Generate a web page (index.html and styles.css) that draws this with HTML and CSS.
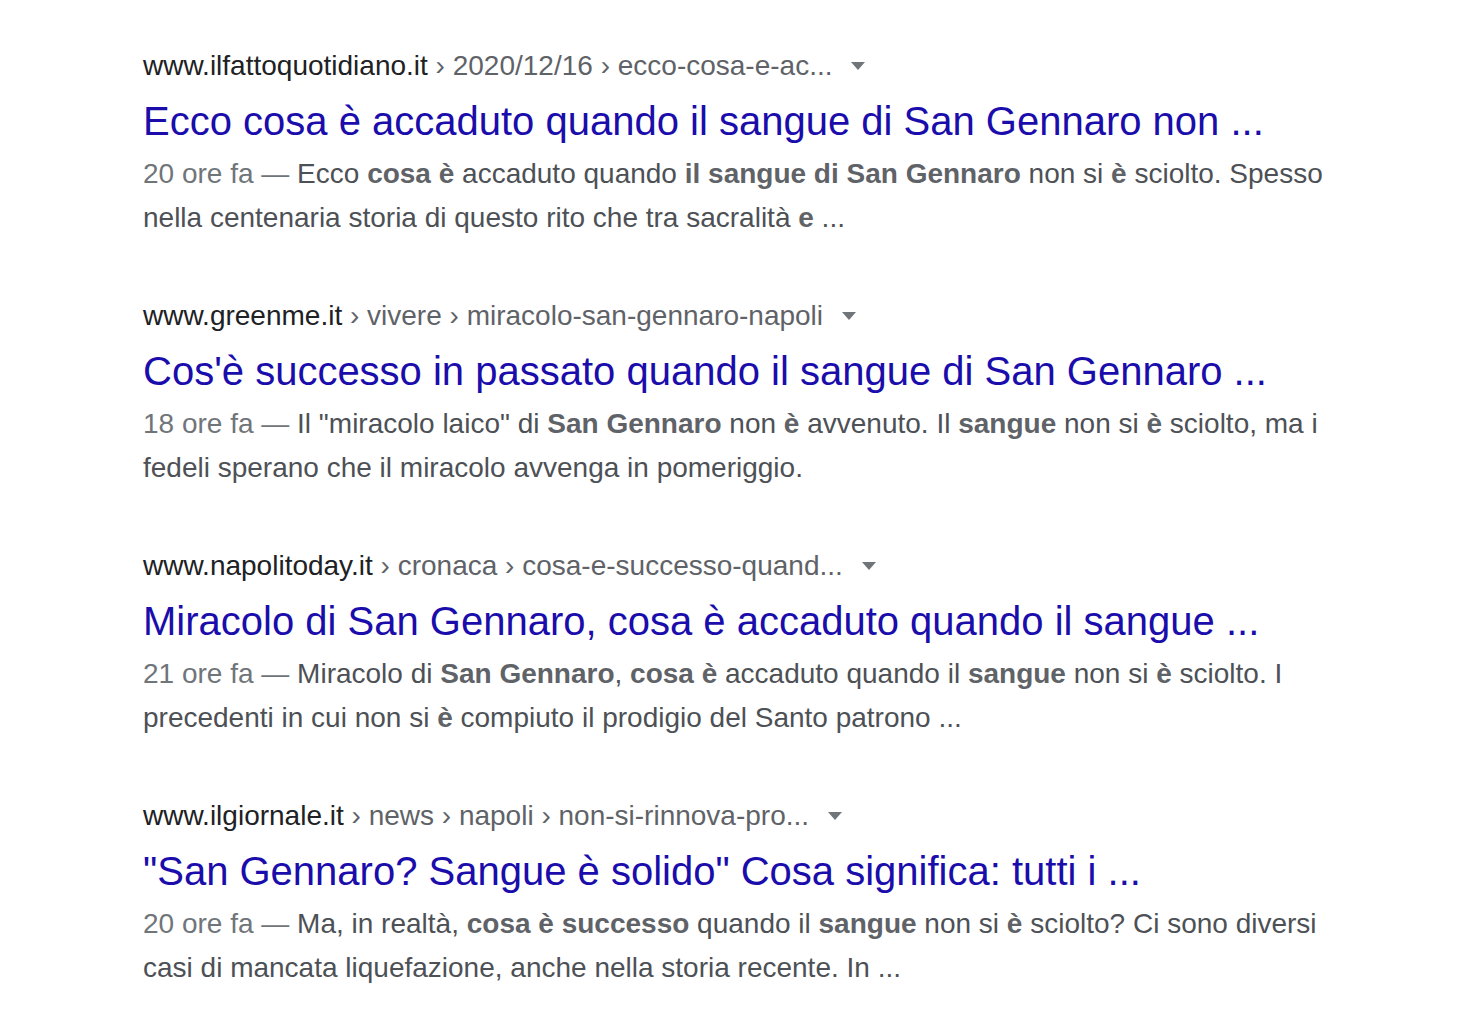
FILE: index.html
```html
<!DOCTYPE html>
<html lang="it">
<head>
<meta charset="utf-8">
<title>Risultati</title>
<link rel="stylesheet" href="styles.css">
</head>
<body>
<div class="results">
  <div class="result">
    <div class="cite"><span class="domain">www.ilfattoquotidiano.it</span> <span class="path">› 2020/12/16 › ecco-cosa-e-ac...</span><span class="arrow"></span></div>
    <a class="title" href="#">Ecco cosa è accaduto quando il sangue di San Gennaro non ...</a>
    <div class="snippet"><span class="date">20 ore fa —</span> Ecco <b>cosa è</b> accaduto quando <b>il sangue di San Gennaro</b> non si <b>è</b> sciolto. Spesso nella centenaria storia di questo rito che tra sacralità <b>e</b> ...</div>
  </div>
  <div class="result">
    <div class="cite"><span class="domain">www.greenme.it</span> <span class="path">› vivere › miracolo-san-gennaro-napoli</span><span class="arrow"></span></div>
    <a class="title" href="#">Cos'è successo in passato quando il sangue di San Gennaro ...</a>
    <div class="snippet"><span class="date">18 ore fa —</span> Il "miracolo laico" di <b>San Gennaro</b> non <b>è</b> avvenuto. Il <b>sangue</b> non si <b>è</b> sciolto, ma i fedeli sperano che il miracolo avvenga in pomeriggio.</div>
  </div>
  <div class="result">
    <div class="cite"><span class="domain">www.napolitoday.it</span> <span class="path">› cronaca › cosa-e-successo-quand...</span><span class="arrow"></span></div>
    <a class="title" href="#">Miracolo di San Gennaro, cosa è accaduto quando il sangue ...</a>
    <div class="snippet"><span class="date">21 ore fa —</span> Miracolo di <b>San Gennaro</b>, <b>cosa è</b> accaduto quando il <b>sangue</b> non si <b>è</b> sciolto. I precedenti in cui non si <b>è</b> compiuto il prodigio del Santo patrono ...</div>
  </div>
  <div class="result">
    <div class="cite"><span class="domain">www.ilgiornale.it</span> <span class="path">› news › napoli › non-si-rinnova-pro...</span><span class="arrow"></span></div>
    <a class="title" href="#">"San Gennaro? Sangue è solido" Cosa significa: tutti i ...</a>
    <div class="snippet"><span class="date">20 ore fa —</span> Ma, in realtà, <b>cosa è successo</b> quando il <b>sangue</b> non si <b>è</b> sciolto? Ci sono diversi casi di mancata liquefazione, anche nella storia recente. In ...</div>
  </div>
</div>
</body>
</html>
```
FILE: styles.css
```css
html, body {
  margin: 0;
  padding: 0;
  background: #fff;
}
body {
  font-family: "Liberation Sans", Arial, sans-serif;
}
.results {
  padding: 46px 0 0 143px;
  width: 1192px;
  display: flex;
  flex-direction: column;
}
.result {
  height: 250px;
  display: flex;
  flex-direction: column;
}
.cite {
  font-size: 28px;
  line-height: 40px;
  white-space: nowrap;
}
.domain { color: #202124; }
.path { color: #5f6368; }
.arrow {
  display: inline-block;
  vertical-align: middle;
  margin-left: 19px;
  margin-bottom: 4px;
  width: 0;
  height: 0;
  border-left: 7px solid transparent;
  border-right: 7px solid transparent;
  border-top: 8px solid #70757a;
}
.title {
  font-size: 40px;
  line-height: 54px;
  color: #1a0dab;
  text-decoration: none;
  white-space: nowrap;
  margin-top: 8px;
  align-self: flex-start;
}
.snippet {
  font-size: 28px;
  line-height: 44px;
  color: #4d5156;
  margin-top: 4px;
}
.snippet b { color: #5f6368; font-weight: bold; }
.date { color: #70757a; }
```
